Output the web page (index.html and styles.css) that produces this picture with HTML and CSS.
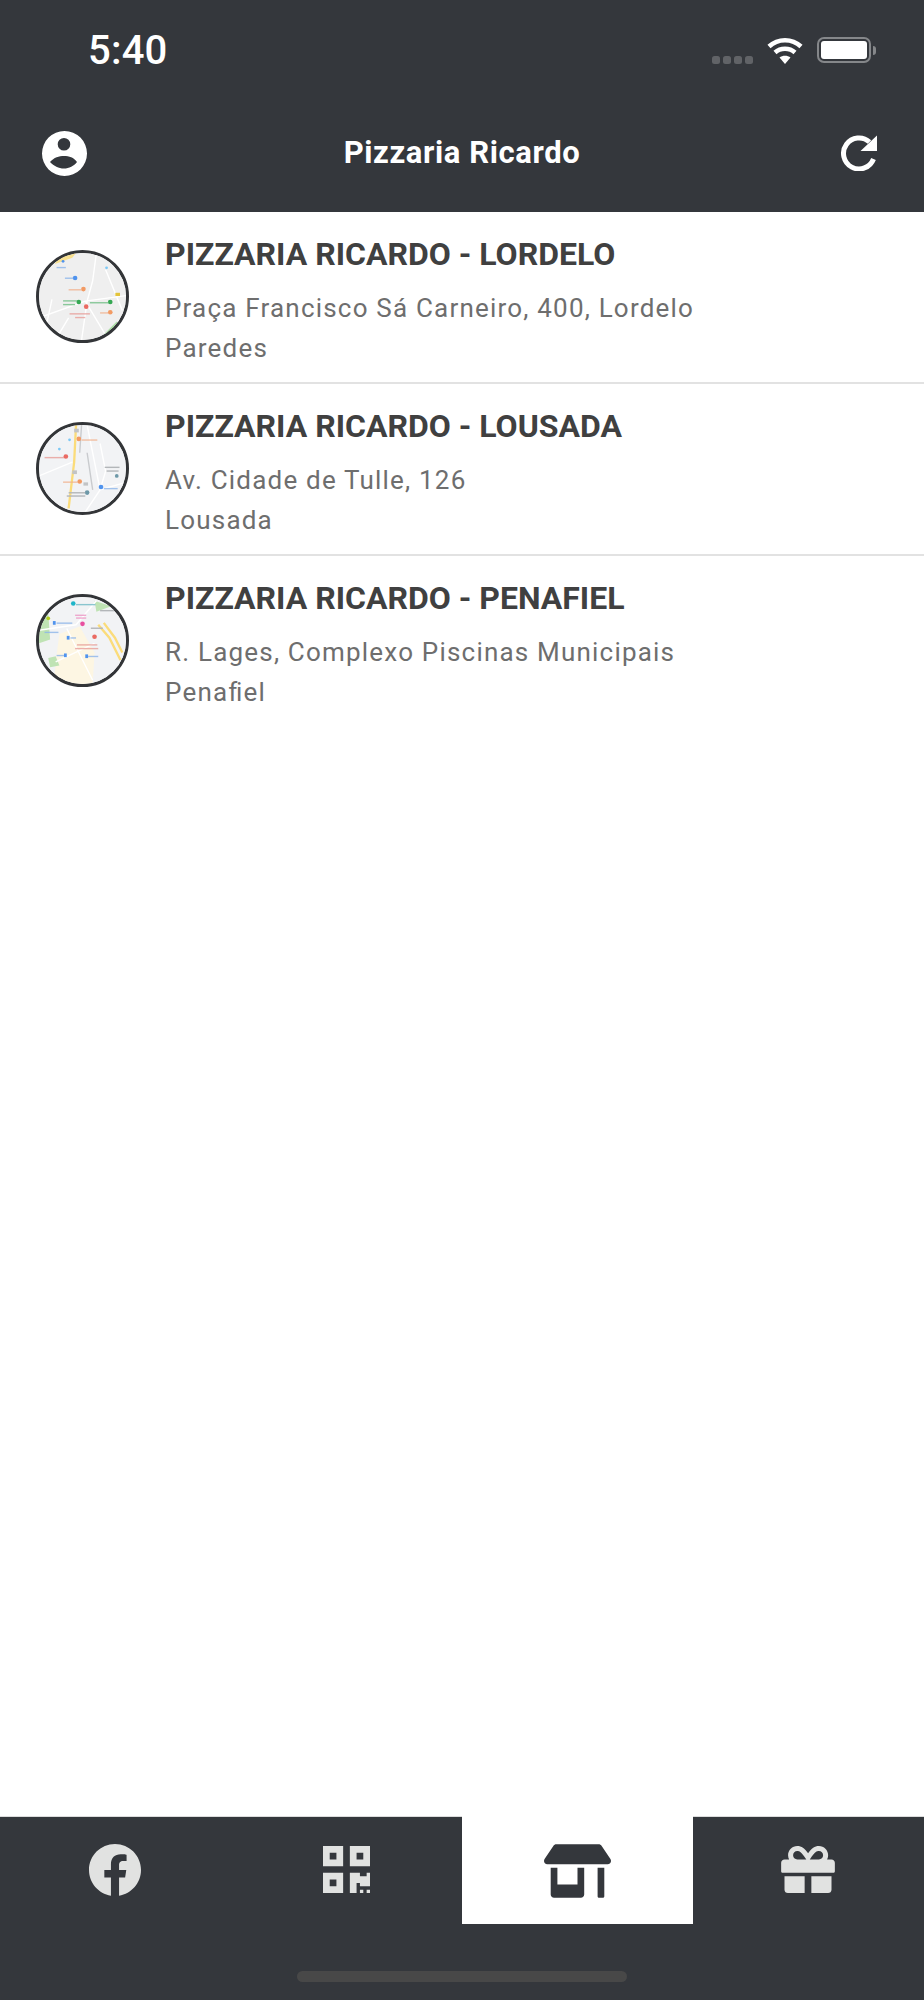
FILE: index.html
```html
<!DOCTYPE html>
<html>
    <head>
        <meta charset="utf-8">
        <title>Pizzaria Ricardo</title>
        <link rel="stylesheet" href="styles.css">
    </head>
    <body>
        <div class="app">
            <header class="top">
                <div class="status">
                    <span class="clock">5:40</span>
                    <div class="status-icons">
                        <div class="signal"><i></i><i></i><i></i><i></i></div>
                        <svg class="wifi" viewBox="0 0 36 27"><path d="M2 9.5C11 1 25 1 34 9.5" /><path d="M8 15.5C13.5 10.5 22.5 10.5 28 15.5" /><path class="wifi-dot" d="M12.5 20.5C15.5 18 20.5 18 23.5 20.5L18 27z" /></svg>
                        <div class="battery"><div class="battery-fill"></div></div>
                        <div class="battery-nub"></div>
                    </div>
                </div>
                <div class="navbar">
                    <svg class="nav-user" viewBox="0 0 45 45"><path fill-rule="evenodd" d="M22.5 0a22.5 22.5 0 1 0 0 45a22.5 22.5 0 1 0 0-45zM22 7a6.3 6.3 0 1 0 0 12.6a6.3 6.3 0 1 0 0-12.6zM8 31C12 26.500 17 25 22 25C27 25 32 26.500 35 31C32 35 27 37.500 22 37.500C16.500 37.500 12 35 8 31z" /></svg>
                    <h1 class="nav-title">Pizzaria Ricardo</h1>
                    <svg class="nav-refresh" viewBox="0 0 36 36"><path class="refresh-arc" d="M28.500 7A15.500 15.500 0 1 0 32.500 24" /><path d="M36 0.500V16H19.500z" /></svg>
                </div>
            </header>

            <main class="list">
                <div class="row">
                    <div class="thumb">
                        <svg viewBox="0 0 94 94">
                            <rect class="m-bg1" width="94" height="94" />
                            <path class="m-road" d="M62 0L58 30L52 52L46 94M72 18L90 62M0 70L50 52L94 46M14 50L8 78M20 90L32 70M50 52L74 92" />
                            <path class="m-yellow" d="M17 12L22 3L40 0L36 5z" />
                            <path class="m-green" d="M70 88L84 74L88 80z" />
                            <circle class="m-blue" cx="26" cy="9" r="1.500" />
                            <rect class="m-blue-l" x="19" y="15" width="10" height="1.500" />
                            <circle class="m-blue" cx="39" cy="27" r="2.500" />
                            <rect class="m-blue-l" x="28" y="26.500" width="9" height="1.500" />
                            <circle class="m-sky" cx="73" cy="16" r="1.500" />
                            <circle class="m-orange" cx="48" cy="39" r="2.500" />
                            <rect class="m-orange-l" x="32" y="39" width="14" height="1.500" />
                            <circle class="m-grn" cx="43" cy="53" r="2.500" />
                            <rect class="m-grn-l" x="26" y="51" width="15" height="1.500" />
                            <rect class="m-grn-l" x="26" y="55" width="13" height="1.500" />
                            <circle class="m-red" cx="51" cy="58" r="2.500" />
                            <rect class="m-red-l" x="33" y="65" width="22" height="1.500" />
                            <rect class="m-red-l" x="39" y="69" width="11" height="1.500" />
                            <circle class="m-grn" cx="77" cy="53" r="2.500" />
                            <rect class="m-grn-l" x="55" y="53" width="20" height="1.500" />
                            <circle class="m-orange" cx="77" cy="64" r="2.500" />
                            <rect class="m-orange-l" x="66" y="64" width="9" height="1.500" />
                            <rect class="m-sign" x="82.500" y="43" width="5" height="3.500" />
                        </svg>
                    </div>
                    <div class="info">
                        <div class="name">PIZZARIA RICARDO - LORDELO</div>
                        <div class="addr">Praça Francisco Sá Carneiro, 400, Lordelo</div>
                        <div class="addr">Paredes</div>
                    </div>
                </div>
                <div class="row">
                    <div class="thumb">
                        <svg viewBox="0 0 94 94">
                            <rect class="m-bg2" width="94" height="94" />
                            <path class="m-road" d="M52 0L58 30L66 70L94 62M66 70L50 94M66 20L72 50L66 70M0 55L36 40" />
                            <path class="m-road-y" d="M40 0L38 40L32 90" />
                            <path class="m-road-p" d="M46 0L44 30M52 30L58 70" />
                            <circle class="m-orange" cx="43" cy="15" r="2.500" />
                            <rect class="m-orange-l" x="46" y="15.500" width="17" height="1.500" />
                            <circle class="m-red" cx="29" cy="34" r="2.500" />
                            <rect class="m-red-l" x="6" y="34.500" width="21" height="1.500" />
                            <circle class="m-sky" cx="22" cy="26" r="1.500" />
                            <circle class="m-sky" cx="33" cy="16" r="1.500" />
                            <circle class="m-orange" cx="44" cy="61" r="2.500" />
                            <rect class="m-orange-l" x="26" y="61" width="16" height="1.500" />
                            <rect class="m-grey" x="38" y="4" width="5" height="4" />
                            <rect class="m-grey" x="36" y="49" width="5" height="4" />
                            <rect class="m-grey" x="48" y="62" width="5" height="3.500" />
                            <circle class="m-blue" cx="67" cy="67" r="2.500" />
                            <rect class="m-blue-l" x="70" y="68" width="15" height="1.500" />
                            <circle class="m-teal" cx="52" cy="73" r="2.500" />
                            <rect class="m-grey-l" x="32" y="72.500" width="18" height="1.500" />
                            <rect class="m-grey-l" x="30" y="76" width="20" height="1.500" />
                            <rect class="m-grey-l" x="71" y="45" width="16" height="1.500" />
                            <rect class="m-grey-l" x="73" y="49" width="13" height="1.500" />
                            <circle class="m-teal" cx="84" cy="55" r="2" />
                        </svg>
                    </div>
                    <div class="info">
                        <div class="name">PIZZARIA RICARDO - LOUSADA</div>
                        <div class="addr">Av. Cidade de Tulle, 126</div>
                        <div class="addr">Lousada</div>
                    </div>
                </div>
                <div class="row">
                    <div class="thumb">
                        <svg viewBox="0 0 94 94">
                            <rect class="m-bg2" width="94" height="94" />
                            <path class="m-tan" d="M22 40L44 32L60 60L58 94L16 94L18 70z" />
                            <path class="m-park" d="M0 20L10 18L12 46L0 50z" />
                            <path class="m-park" d="M10 66L18 64L22 74L12 76z" />
                            <path class="m-park" d="M60 4L78 10L62 16z" />
                            <path class="m-road-y" d="M64 30L76 44L88 68" />
                            <path class="m-road-y" d="M70 28L82 44L90 60" />
                            <path class="m-road" d="M0 36L40 30L62 4M30 34L58 90M18 70L60 50" />
                            <circle class="m-lime" cx="10" cy="23" r="2" />
                            <circle class="m-pink" cx="47" cy="29" r="2.500" />
                            <rect class="m-pink-l" x="39" y="19" width="12" height="1.500" />
                            <rect class="m-pink-l" x="40" y="22" width="11" height="1.500" />
                            <circle class="m-red" cx="60" cy="43" r="2.500" />
                            <rect class="m-red-l" x="41" y="51" width="22" height="1.500" />
                            <rect class="m-red-l" x="39" y="55" width="25" height="1.500" />
                            <circle class="m-teal2" cx="37" cy="7" r="2.500" />
                            <rect class="m-teal-l" x="40" y="7.500" width="21" height="1.500" />
                            <rect class="m-blue" x="15" y="26" width="3" height="4" />
                            <rect class="m-blue-l" x="19" y="27.500" width="17" height="1.500" />
                            <rect class="m-blue" x="30" y="42" width="3" height="4" />
                            <rect class="m-blue-l" x="34" y="43.500" width="6" height="1.500" />
                            <rect class="m-blue-l" x="6" y="37.500" width="15" height="1.500" />
                            <rect class="m-blue" x="27" y="61" width="3" height="4" />
                            <rect class="m-blue-l" x="19" y="62.500" width="8" height="1.500" />
                            <rect class="m-blue" x="50" y="62" width="3" height="4" />
                            <rect class="m-blue-l" x="53" y="63.500" width="11" height="1.500" />
                            <rect class="m-grey-l" x="66" y="14" width="16" height="1.500" />
                            <rect class="m-grey-l" x="56" y="33" width="13" height="1.500" />
                        </svg>
                    </div>
                    <div class="info">
                        <div class="name">PIZZARIA RICARDO - PENAFIEL</div>
                        <div class="addr">R. Lages, Complexo Piscinas Municipais</div>
                        <div class="addr">Pena<span class="tight">f</span>iel</div>
                    </div>
                </div>
            </main>

            <footer class="bottom">
                <nav class="tabs">
                    <div class="tab">
                        <svg class="ico-fb" viewBox="8 8 496 496"><path d="M504 256C504 119 393 8 256 8S8 119 8 256c0 123.780 90.690 226.380 209.250 245V327.690h-63V256h63v-54.640c0-62.150 37-96.480 93.670-96.480 27.140 0 55.520 4.840 55.520 4.840v61h-31.280c-30.800 0-40.410 19.120-40.410 38.730V256h68.780l-11 71.690h-57.780V501C413.310 482.380 504 379.780 504 256z" /></svg>
                    </div>
                    <div class="tab">
                        <svg class="ico-qr" viewBox="0 32 448 448"><path d="M0 224h192V32H0v192zM64 96h64v64H64V96zm192-64v192h192V32H256zm128 128h-64V96h64v64zM0 480h192V288H0v192zm64-128h64v64H64v-64zm352-64h32v128h-96v-32h-32v96h-64V288h96v32h64v-32zm0 160h32v32h-32v-32zm-64 0h32v32h-32v-32z" /></svg>
                    </div>
                    <div class="tab active">
                        <svg class="ico-store" viewBox="0 0 640 512"><path d="M320 384H128V224H64v256c0 17.700 14.300 32 32 32h256c17.700 0 32-14.300 32-32V224h-64v160zm314.600-241.800l-85.300-128c-6-8.900-16-14.200-26.700-14.200H117.400c-10.700 0-20.700 5.300-26.600 14.200l-85.300 128c-14.200 21.300 1 49.800 26.600 49.800H608c25.500 0 40.700-28.500 26.600-49.800zM512 496c0 8.800 7.200 16 16 16h32c8.800 0 16-7.200 16-16V224h-64v272z" /></svg>
                    </div>
                    <div class="tab">
                        <svg class="ico-gift" viewBox="0 32 512 448"><path d="M32 448c0 17.700 14.300 32 32 32h160V320H32v128zm256 32h160c17.700 0 32-14.300 32-32V320H288v160zm192-320h-42.100c6.200-12.100 10.100-25.500 10.100-40 0-48.500-39.500-88-88-88-41.600 0-68.500 21.300-103 68.300-34.500-47-61.400-68.300-103-68.300-48.500 0-88 39.500-88 88 0 14.500 3.800 27.900 10.100 40H32c-17.700 0-32 14.300-32 32v80c0 8.800 7.200 16 16 16h480c8.800 0 16-7.200 16-16v-80c0-17.700-14.300-32-32-32zm-326.100 0c-22.100 0-40-17.900-40-40s17.900-40 40-40c19.900 0 34.600 3.300 86.100 80h-86.100zm206.100 0h-87.100c51.400-76.500 65.700-80 87.100-80 22.100 0 40 17.900 40 40s-17.900 40-40 40z" /></svg>
                    </div>
                </nav>
                <div class="home-bar"><div class="home-pill"></div></div>
            </footer>
        </div>
    </body>
</html>
```

FILE: styles.css
```css
html, body {
    margin: 0px;
    padding: 0px;
}
body {
    width: 924px;
    height: 2000px;
    background-color: #ffffff;
    font-family: Roboto, "Liberation Sans", sans-serif;
    overflow: hidden;
}
.app {
    display: flex;
    flex-direction: column;
    height: 2000px;
}

/* top */
.top {
    height: 212px;
    background-color: #34373c;
    color: #ffffff;
    flex-shrink: 0;
}
.status {
    height: 100px;
    display: flex;
    justify-content: space-between;
    padding: 0px 48px 0px 88px;
}
.clock {
    font-size: 40px;
    font-weight: 500;
    letter-spacing: 0.2px;
    line-height: 46px;
    margin-top: 28px;
}
.status-icons {
    display: flex;
    align-items: flex-start;
    padding-top: 37px;
}
.signal {
    display: flex;
    gap: 3px;
    margin-top: 19px;
    margin-right: 14px;
}
.signal i {
    display: block;
    width: 8px;
    height: 8px;
    border-radius: 2.5px;
    background-color: #616367;
}
.wifi {
    width: 36px;
    height: 27px;
    margin-right: 14px;
}
.wifi path {
    fill: none;
    stroke: #ffffff;
    stroke-width: 4.5px;
}
.wifi .wifi-dot {
    fill: #ffffff;
    stroke: none;
}
.battery {
    box-sizing: border-box;
    width: 54px;
    height: 26px;
    border: 2px solid #85878a;
    border-radius: 7px;
    padding: 2px;
}
.battery-fill {
    height: 100%;
    background-color: #ffffff;
    border-radius: 3px;
}
.battery-nub {
    width: 3px;
    height: 9px;
    margin: 9px 0px 0px 2px;
    background-color: #85878a;
    border-radius: 0px 3px 3px 0px;
}
.navbar {
    height: 112px;
    display: grid;
    grid-template-columns: 1fr auto 1fr;
    align-items: center;
    padding: 0px 47px 6px 47px;
    box-sizing: border-box;
}
.navbar svg {
    fill: #ffffff;
}
.navbar .refresh-arc {
    fill: none;
    stroke: #ffffff;
    stroke-width: 5px;
}
.nav-user {
    width: 45px;
    height: 45px;
    margin-left: -5px;
}
.nav-refresh {
    width: 36px;
    height: 36px;
    justify-self: end;
}
.nav-title {
    margin: 0px;
    font-size: 31px;
    font-weight: 700;
    line-height: 36px;
    letter-spacing: 0.6px;
}

/* list */
.list {
    flex-grow: 1;
}
.row {
    box-sizing: border-box;
    height: 172px;
    display: flex;
    align-items: flex-start;
    padding-left: 36px;
    border-bottom: 2px solid #e2e2e2;
}
.row:last-child {
    border-bottom: none;
}
.thumb {
    box-sizing: border-box;
    width: 93px;
    height: 93px;
    margin-top: 38px;
    border: 3px solid #333538;
    border-radius: 50%;
    overflow: hidden;
    flex-shrink: 0;
}
.thumb svg {
    display: block;
    width: 100%;
    height: 100%;
    filter: blur(0.5px);
}
.info {
    margin-left: 36px;
    padding-top: 23px;
}
.name {
    font-size: 32px;
    font-weight: 700;
    color: #404040;
    line-height: 38px;
    margin-bottom: 15px;
}
.addr {
    font-size: 26px;
    color: #6e6e6e;
    line-height: 40px;
    letter-spacing: 1.2px;
}
.tight {
    letter-spacing: -1.3px;
}

/* map bits */
.m-bg1 { fill: #efefef; }
.m-bg2 { fill: #f2f3f5; }
.m-road { fill: none; stroke: #ffffff; stroke-width: 1.5px; }
.m-road-y { fill: none; stroke: #fbdc7a; stroke-width: 2.5px; }
.m-road-p { fill: none; stroke: #c9cbce; stroke-width: 1.5px; }
.m-tan { fill: #fdf6e3; }
.m-park { fill: #bfe3b4; }
.m-yellow { fill: #f8e08e; }
.m-green { fill: #a8dca0; }
.m-blue { fill: #4f93ee; }
.m-blue-l { fill: #8bb4ea; opacity: 0.8; }
.m-sky { fill: #7cc8f5; }
.m-orange { fill: #f29a63; }
.m-orange-l { fill: #f0b08c; opacity: 0.8; }
.m-grn { fill: #35a853; }
.m-grn-l { fill: #6fbe85; opacity: 0.8; }
.m-red { fill: #ea6a62; }
.m-red-l { fill: #e79c97; opacity: 0.8; }
.m-pink { fill: #e84fa0; }
.m-pink-l { fill: #ec94c3; opacity: 0.8; }
.m-teal { fill: #6d98a8; }
.m-teal2 { fill: #1fb5c9; }
.m-teal-l { fill: #6fb9c5; opacity: 0.8; }
.m-lime { fill: #b6cf1e; }
.m-grey { fill: #c2c4c6; }
.m-grey-l { fill: #b3b6b9; }
.m-sign { fill: #e3c43b; }

/* bottom */
.bottom {
    flex-shrink: 0;
    height: 184px;
    background-color: #34373c;
    box-sizing: border-box;
}
.tabs {
    display: grid;
    grid-template-columns: repeat(4, 1fr);
    height: 108px;
}
.tab {
    display: flex;
    justify-content: center;
    padding-top: 27px;
    box-sizing: border-box;
    border-top: 1px solid #dcdcdc;
}
.tab svg {
    fill: #e1e2e1;
}
.tab.active {
    background-color: #ffffff;
    border-top-color: #ffffff;
}
.tab.active svg {
    fill: #34373c;
}
.ico-fb {
    width: 52px;
    height: 52px;
    margin-right: 2px;
}
.ico-qr {
    width: 47px;
    height: 47px;
    margin-top: 2px;
}
.ico-store {
    width: 67px;
    height: 54px;
}
.ico-gift {
    width: 54px;
    height: 47px;
    margin-top: 2px;
    margin-right: 2px;
}
.home-bar {
    display: flex;
    justify-content: center;
    padding-top: 47px;
}
.home-pill {
    width: 330px;
    height: 11px;
    border-radius: 6px;
    background-color: #484848;
}
```
